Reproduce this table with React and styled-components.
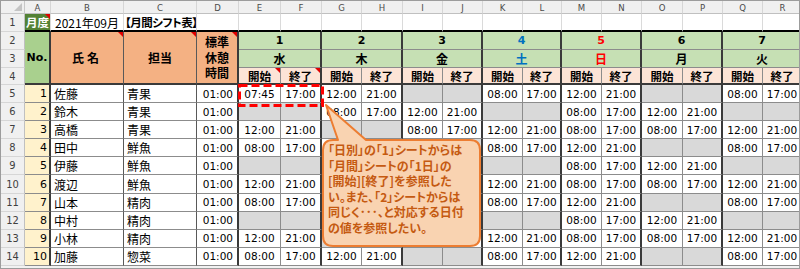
import React from "react";
import styled, { createGlobalStyle, css } from "styled-components";

const GlobalStyle = createGlobalStyle`
  body {
    margin: 0;
    background: #fff;
  }
`;

const COL_WIDTHS = [24, 26, 73, 73, 42, 42, 41, 40, 41, 40, 40, 40, 39, 40, 40, 41, 40, 40, 40];
const LETTERS = ["A", "B", "C", "D", "E", "F", "G", "H", "I", "J", "K", "L", "M", "N", "O", "P", "Q", "R"];

const DAYS = [
  { num: "1", wd: "水" },
  { num: "2", wd: "木" },
  { num: "3", wd: "金" },
  { num: "4", wd: "土", color: "#0070c0" },
  { num: "5", wd: "日", color: "#ff0000" },
  { num: "6", wd: "月" },
  { num: "7", wd: "火" },
];

const A = ["08:00", "17:00", "12:00", "21:00", null, null, "08:00", "17:00", "12:00", "21:00", null, null, "08:00", "17:00"];
const B = [null, null, "08:00", "17:00", "12:00", "21:00", null, null, "08:00", "17:00", "12:00", "21:00", null, null];
const C = ["12:00", "21:00", null, null, "08:00", "17:00", "12:00", "21:00", "08:00", "17:00", "08:00", "17:00", "12:00", "21:00"];

const STAFF = [
  { no: 1, name: "佐藤", dept: "青果", shifts: ["07:45", ...A.slice(1)] },
  { no: 2, name: "鈴木", dept: "青果", shifts: B },
  { no: 3, name: "高橋", dept: "青果", shifts: C },
  { no: 4, name: "田中", dept: "鮮魚", shifts: A },
  { no: 5, name: "伊藤", dept: "鮮魚", shifts: B },
  { no: 6, name: "渡辺", dept: "鮮魚", shifts: C },
  { no: 7, name: "山本", dept: "精肉", shifts: A },
  { no: 8, name: "中村", dept: "精肉", shifts: B },
  { no: 9, name: "小林", dept: "精肉", shifts: C },
  { no: 10, name: "加藤", dept: "惣菜", shifts: A },
];

const NOTE = [
  "「日別」の「1」シートからは",
  "「月間」シートの「1日」の",
  "[開始][終了]を参照した",
  "い。また、「2」シートからは",
  "同じく･･･、と対応する日付",
  "の値を参照したい。",
];

const THIN = "1px solid #8c8c8c";
const THICK = "2px solid #3a3a3a";

const Frame = styled.div`
  width: 800px;
  height: 269px;
  box-sizing: border-box;
  border: 1px solid #9c9c9c;
  overflow: hidden;
  background: #f2f2f2;
`;

const Sheet = styled.div`
  position: relative;
  display: grid;
  grid-template-columns: ${COL_WIDTHS.map((w) => `${w}px`).join(" ")};
  grid-template-rows: 13px 18px 18px 18px 17px repeat(10, 18.1px);
  font-family: "Noto Sans CJK JP", sans-serif;
  color: #000;
`;

const cell = css`
  position: relative;
  box-sizing: border-box;
  display: flex;
  align-items: center;
  min-width: 0;
  white-space: nowrap;
`;

const Corner = styled.div`
  ${cell};
  background: #f0f0f0;
  border-right: 1px solid #c8c8c8;
  border-bottom: 1px solid #c8c8c8;

  &::after {
    content: "";
    position: absolute;
    right: 2px;
    bottom: 2px;
    border-style: solid;
    border-width: 0 0 8px 8px;
    border-color: transparent transparent #c4c4c4 transparent;
  }
`;

const ColHead = styled.div`
  ${cell};
  justify-content: center;
  background: #f0f0f0;
  border-right: 1px solid #d6d6d6;
  border-bottom: 1px solid #c0c0c0;
  font-family: "DejaVu Sans Condensed", "DejaVu Sans", sans-serif;
  font-size: 9.5px;
  color: #4a4a4a;
`;

const RowHead = styled.div`
  ${cell};
  justify-content: center;
  background: #f0f0f0;
  border-right: 1px solid #c0c0c0;
  border-bottom: 1px solid #d6d6d6;
  font-family: "DejaVu Sans Condensed", "DejaVu Sans", sans-serif;
  font-size: 11px;
  color: #404040;
`;

const MonthLabel = styled.div`
  ${cell};
  justify-content: center;
  background: #548235;
  color: #fff;
  font-weight: 700;
  font-size: 11.5px;
  border-right: 1px solid #d9d9d9;
  border-bottom: 2px solid #000;
`;

const TopCell = styled.div`
  ${cell};
  justify-content: ${(p) => (p.$left ? "flex-start" : "center")};
  padding: 0 ${(p) => (p.$left ? "1px" : "2px")};
  background: #fff;
  font-size: ${(p) => (p.$bold ? "11.5px" : "12px")};
  font-weight: ${(p) => (p.$bold ? 700 : 400)};
  font-feature-settings: ${(p) => (p.$bold ? '"palt"' : "normal")};
  letter-spacing: ${(p) => (p.$bold ? "-0.5px" : "0")};
  border-right: 1px solid #dadada;
  border-bottom: 2px solid #000;
  overflow: hidden;
`;

const NoHead = styled.div`
  ${cell};
  grid-row: span 3;
  justify-content: center;
  background: #a9d08e;
  font-family: "DejaVu Sans", sans-serif;
  font-weight: 700;
  font-size: 11px;
  border-right: ${THICK};
  border-bottom: ${THICK};
`;

const FieldHead = styled.div`
  ${cell};
  grid-row: span 3;
  justify-content: center;
  text-align: center;
  background: #f4b183;
  font-weight: 700;
  font-size: 12px;
  line-height: 15.5px;
  letter-spacing: ${(p) => p.$spread || 0};
  border-right: ${(p) => (p.$thick ? THICK : "1px solid #595959")};
  border-bottom: ${THICK};
`;

const DayCell = styled.div`
  ${cell};
  grid-column: span 2;
  justify-content: center;
  background: #c6e0b4;
  color: ${(p) => p.$color || "#000"};
  font-family: ${(p) => (p.$digit ? '"DejaVu Sans", sans-serif' : '"Noto Sans CJK JP", sans-serif')};
  font-weight: 700;
  font-size: ${(p) => (p.$digit ? "11px" : "12px")};
  border-right: ${THICK};
  border-bottom: ${THIN};
`;

const TimeHead = styled.div`
  ${cell};
  justify-content: center;
  background: #fce4d6;
  font-weight: 700;
  font-size: 11.5px;
  border-right: ${(p) => (p.$end ? THICK : THIN)};
  border-bottom: ${THICK};
`;

const IndexCell = styled.div`
  ${cell};
  justify-content: flex-end;
  padding-right: 2px;
  background: #fff2cc;
  font-family: "DejaVu Sans", sans-serif;
  font-size: 11px;
  border-right: ${THICK};
  border-bottom: ${THIN};
`;

const TextCell = styled.div`
  ${cell};
  padding-left: 3px;
  background: #fff;
  font-size: 12px;
  border-right: 1px solid #595959;
  border-bottom: ${THIN};
`;

const BreakCell = styled.div`
  ${cell};
  justify-content: flex-end;
  padding-right: 4px;
  background: #fff;
  font-family: "DejaVu Sans", sans-serif;
  font-size: 10.5px;
  border-right: ${THICK};
  border-bottom: ${THIN};
`;

const ShiftCell = styled.div`
  ${cell};
  justify-content: center;
  background: ${(p) => (p.$empty ? "#d9d9d9" : "#fff")};
  font-family: "DejaVu Sans", sans-serif;
  font-size: 10.5px;
  border-right: ${(p) => (p.$end ? THICK : THIN)};
  border-bottom: ${THIN};
`;

const Mark = styled.span`
  position: absolute;
  top: 0;
  right: 0;
  border-style: solid;
  border-width: 0 5px 5px 0;
  border-color: transparent #e00000 transparent transparent;
`;

const Highlight = styled.svg`
  position: absolute;
  left: 236px;
  top: 82px;
  overflow: visible;
  pointer-events: none;
`;

const Callout = styled.div`
  position: absolute;
  left: 321px;
  top: 101px;
  width: 160px;
  height: 145px;
  box-sizing: border-box;
  padding: 40px 0 0 6px;
`;

const CalloutShape = styled.svg`
  position: absolute;
  left: 0;
  top: 0;
`;

const NoteText = styled.div`
  position: relative;
  color: #c55a11;
  font-family: "Noto Sans CJK JP", sans-serif;
  font-weight: 700;
  font-size: 12px;
  line-height: 15.6px;
  font-feature-settings: "palt";
  white-space: nowrap;
`;

function App() {
  return (
    <>
      <GlobalStyle />
      <Frame>
        <Sheet>
          <Corner />
          {LETTERS.map((l) => (
            <ColHead key={l}>{l}</ColHead>
          ))}

          <RowHead>1</RowHead>
          <MonthLabel>
            月度
            <Mark />
          </MonthLabel>
          <TopCell>2021年09月</TopCell>
          <TopCell $left $bold>【月間シフト表】</TopCell>
          {LETTERS.slice(3).map((l) => (
            <TopCell key={l} />
          ))}

          <RowHead>2</RowHead>
          <NoHead>No.</NoHead>
          <FieldHead $spread="3px">
            氏名
            <Mark />
          </FieldHead>
          <FieldHead>
            担当
            <Mark />
          </FieldHead>
          <FieldHead $thick>
            標準
            <br />
            休憩
            <br />
            時間
            <Mark />
          </FieldHead>
          {DAYS.map((d) => (
            <DayCell key={d.num} $digit $color={d.color}>
              {d.num}
            </DayCell>
          ))}

          <RowHead>3</RowHead>
          {DAYS.map((d) => (
            <DayCell key={d.wd} $color={d.color}>
              {d.wd}
            </DayCell>
          ))}

          <RowHead>4</RowHead>
          {DAYS.map((d, i) => (
            <React.Fragment key={d.num}>
              <TimeHead>
                開始
                {i === 0 && <Mark />}
              </TimeHead>
              <TimeHead $end>
                終了
                {i === 0 && <Mark />}
              </TimeHead>
            </React.Fragment>
          ))}

          {STAFF.map((s, r) => (
            <React.Fragment key={s.no}>
              <RowHead>{r + 5}</RowHead>
              <IndexCell>{s.no}</IndexCell>
              <TextCell>{s.name}</TextCell>
              <TextCell>{s.dept}</TextCell>
              <BreakCell>01:00</BreakCell>
              {s.shifts.map((t, i) => (
                <ShiftCell key={i} $empty={!t} $end={i % 2 === 1}>
                  {t}
                </ShiftCell>
              ))}
            </React.Fragment>
          ))}

          <Highlight width="90" height="26">
            <rect x="2.5" y="2.5" width="83" height="20" fill="none" stroke="#ff0000" strokeWidth="3" strokeDasharray="8 4" />
          </Highlight>

          <Callout>
            <CalloutShape width="162" height="146">
              <path
                d="M 11 38 L 16 38 L 4 3 L 44 38 L 148 38 Q 158 38 158 48 L 158 134 Q 158 144 148 144 L 11 144 Q 1 144 1 134 L 1 48 Q 1 38 11 38 Z"
                fill="#f9d3b1"
                stroke="#ed7d31"
                strokeWidth="2"
                strokeLinejoin="round"
              />
            </CalloutShape>
            <NoteText>
              {NOTE.map((line) => (
                <div key={line}>{line}</div>
              ))}
            </NoteText>
          </Callout>
        </Sheet>
      </Frame>
    </>
  );
}

export default App;
